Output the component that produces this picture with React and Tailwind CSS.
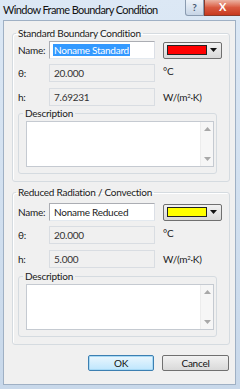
import { useState } from "react";

const FONT = { fontFamily: "Lato, 'Noto Sans', sans-serif" };

const Arrow = ({ up }) => (
  <svg width="7" height="4" viewBox="0 0 7 4">
    <path d={up ? "M0 4 L3.5 0 L7 4 Z" : "M0 0 L7 0 L3.5 4 Z"} fill="#a8a8a8" />
  </svg>
);

const Description = ({ legendTop }) => (
  <fieldset
    className="ml-[5px] w-[199px] border border-[#d5dbe0] rounded-[3px] pb-[6px]"
    style={{ marginTop: legendTop }}
  >
    <legend className="ml-[4px] px-[2px] leading-[15px] text-[10px] text-[#1a1a1a]">
      Description
    </legend>
    {/* Text box with its scroll bar */}
    <div className="ml-[7px] w-[188px] h-[46px] flex border border-[#c5cad1] bg-white">
      <div className="flex-1" />
      <div className="w-[13px] flex flex-col items-center justify-between py-[5px] bg-[#f6f6f6] border-l border-[#ececec]">
        <Arrow up />
        <Arrow />
      </div>
    </div>
  </fieldset>
);

const Group = ({ title, name, selected, swatch, theta, h, top, nameGap, descGap }) => (
  <fieldset
    className="ml-[8px] w-[218px] border border-[#d5dbe0] rounded-[3px] pb-[7px] shadow-[inset_1px_1px_0_#ffffff]"
    style={{ marginTop: top }}
  >
    <legend className="ml-[3px] px-[2px] leading-[15px] text-[10px] text-[#1a1a1a]">
      {title}
    </legend>

    {/* Name row */}
    <div className="flex items-center h-[18px] pl-[5px]" style={{ marginTop: nameGap }}>
      <span className="w-[31px] text-[10px] text-[#1a1a1a]">Name:</span>
      <div className="w-[106px] h-[18px] flex items-center pl-[3px] bg-white border border-[#abadb3] border-r-[#dbdfe6] border-b-[#e3e9ef]">
        <span
          className={`text-[10px] leading-[12px] px-[1px] ${
            selected ? "bg-[#3399ff] text-white" : "text-[#1a1a1a]"
          }`}
        >
          {name}
        </span>
      </div>
      <div className="ml-[8px] w-[59px] h-[17px] flex items-center pl-[3px] pr-[4px] gap-[3px] rounded-[2px] border border-[#707070] bg-gradient-to-b from-[#f2f2f2] to-[#d8d8d8]">
        <div className="flex-1 h-[10px] border border-[#222]" style={{ background: swatch }} />
        <svg width="7" height="4" viewBox="0 0 7 4">
          <path d="M0 0 L7 0 L3.5 4 Z" fill="#111" />
        </svg>
      </div>
    </div>

    {/* θ row */}
    <div className="flex items-center h-[18px] pl-[5px] mt-[5px]">
      <span className="w-[31px] text-[10px] text-[#1a1a1a]">θ:</span>
      <div className="w-[106px] h-[18px] flex items-center pl-[4px] bg-[#f0f0f0] border border-[#d9dde2] text-[10px] text-[#333]">
        {theta}
      </div>
      <span className="ml-[8px] -mt-[4px] text-[10px] text-[#1a1a1a]">°C</span>
    </div>

    {/* h row */}
    <div className="flex items-center h-[18px] pl-[5px] mt-[6px]">
      <span className="w-[31px] text-[10px] text-[#1a1a1a]">h:</span>
      <div className="w-[106px] h-[18px] flex items-center pl-[4px] bg-[#f0f0f0] border border-[#d9dde2] text-[10px] text-[#333]">
        {h}
      </div>
      <span className="ml-[8px] text-[10px] text-[#1a1a1a]">
        W/(m<sup className="text-[6px]">2</sup>·K)
      </span>
    </div>

    <Description legendTop={descGap} />
  </fieldset>
);

export default function App() {
  const [std] = useState({ name: "Noname Standard", theta: "20.000", h: "7.69231" });
  const [red] = useState({ name: "Noname Reduced", theta: "20.000", h: "5.000" });

  return (
    <div
      className="w-[240px] h-[389px] overflow-hidden flex flex-col tracking-[-0.25px] bg-gradient-to-b from-[#dce8f5] to-[#c8d8ea]"
      style={FONT}
    >
      {/* Title bar */}
      <div className="h-[20px] flex items-start">
        <span className="pl-[3px] pt-[3px] text-[11px] leading-[13px] tracking-[-0.6px] text-[#111]">
          Window Frame Boundary Condition
        </span>
        <div className="ml-auto flex">
          <div className="w-[19px] h-[16px] flex items-center justify-center border border-[#8a9bb0] border-t-0 rounded-bl-[3px] bg-gradient-to-b from-[#eef3f9] to-[#c7d5e6] text-[10px] font-bold text-[#4a5a70]">
            ?
          </div>
          <div className="w-[36px] h-[16px] flex items-center pl-[14px] border border-[#8a3a2a] border-t-0 border-r-0 bg-gradient-to-b from-[#eab3a3] via-[#d9593f] to-[#c7391f] text-[11px] font-bold text-white">
            X
          </div>
        </div>
      </div>

      {/* Client area */}
      <div className="ml-[3px] w-[233px] h-[365px] flex flex-col border border-[#9fb0c4] bg-[#f0f0f0]">
        <Group
          title="Standard Boundary Condition"
          name={std.name}
          selected
          swatch="#ff0000"
          theta={std.theta}
          h={std.h}
          top="5px"
          nameGap="0px"
          descGap="0px"
        />
        <Group
          title="Reduced Radiation / Convection"
          name={red.name}
          swatch="#ffff00"
          theta={red.theta}
          h={red.h}
          top="3px"
          nameGap="3px"
          descGap="1px"
        />

        {/* Buttons */}
        <div className="flex gap-[8px] ml-[84px] mt-[10px]">
          <button className="w-[66px] h-[16px] rounded-[2px] border border-[#3c7fb1] bg-gradient-to-b from-[#eaf6fd] to-[#bee6fd] text-[10px] text-[#111] shadow-[inset_0_0_0_1px_#a7d9f5]">
            OK
          </button>
          <button className="w-[67px] h-[16px] rounded-[2px] border border-[#707070] bg-gradient-to-b from-[#f2f2f2] to-[#d9d9d9] text-[10px] text-[#111]">
            Cancel
          </button>
        </div>
      </div>
    </div>
  );
}
